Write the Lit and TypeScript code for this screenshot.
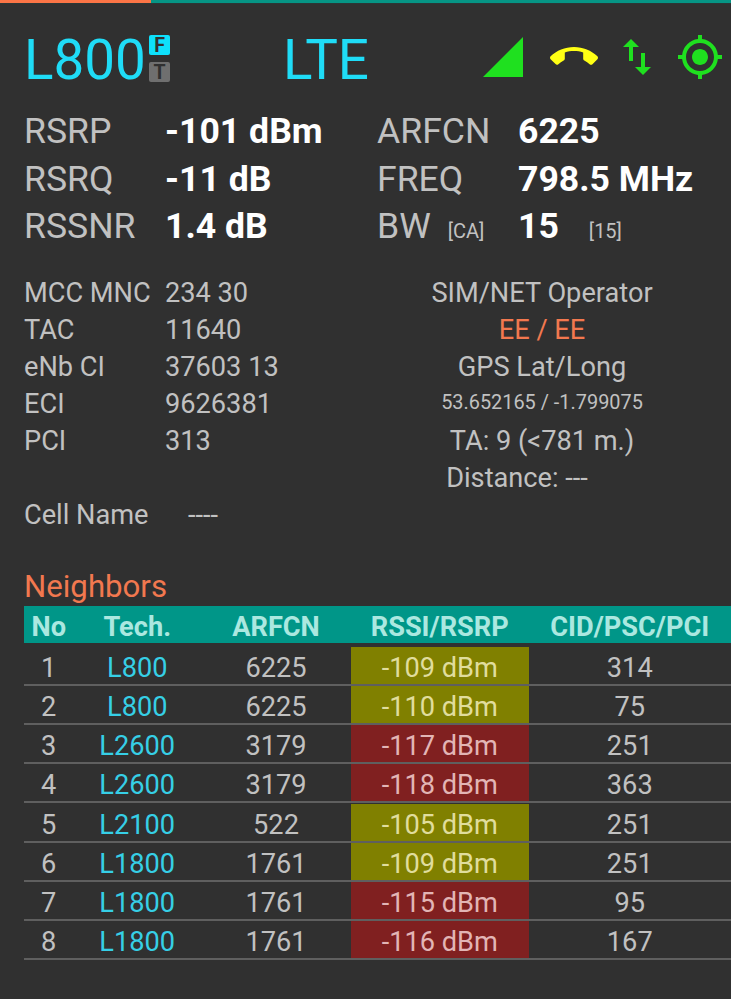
import { LitElement, html, css, svg } from "lit";
import { customElement } from "lit/decorators.js";
import { classMap } from "lit/directives/class-map.js";

interface Neighbor {
  tech: string;
  arfcn: number;
  level: number;
  cid: number;
}

const NEIGHBORS: Neighbor[] = [
  { tech: "L800", arfcn: 6225, level: -109, cid: 314 },
  { tech: "L800", arfcn: 6225, level: -110, cid: 75 },
  { tech: "L2600", arfcn: 3179, level: -117, cid: 251 },
  { tech: "L2600", arfcn: 3179, level: -118, cid: 363 },
  { tech: "L2100", arfcn: 522, level: -105, cid: 251 },
  { tech: "L1800", arfcn: 1761, level: -109, cid: 251 },
  { tech: "L1800", arfcn: 1761, level: -115, cid: 95 },
  { tech: "L1800", arfcn: 1761, level: -116, cid: 167 },
];

const IDENTITY: [string, string][] = [
  ["MCC MNC", "234 30"],
  ["TAC", "11640"],
  ["eNb CI", "37603 13"],
  ["ECI", "9626381"],
  ["PCI", "313"],
];

const SIGNAL = svg`<path d="M2 22h20V2z"/>`;
const CALL = svg`<path d="M12 9c-1.6 0-3.15.25-4.6.72v3.1c0 .39-.23.74-.56.9-.98.49-1.87 1.12-2.66 1.85-.18.18-.43.28-.7.28-.28 0-.53-.11-.71-.29L.29 13.08c-.18-.17-.29-.42-.29-.7 0-.28.11-.53.29-.71C3.34 8.78 7.46 7 12 7s8.66 1.78 11.71 4.67c.18.18.29.43.29.71 0 .28-.11.53-.29.71l-2.48 2.48c-.18.18-.43.29-.71.29-.27 0-.52-.11-.7-.28-.79-.74-1.69-1.36-2.67-1.85-.33-.16-.56-.5-.56-.9v-3.1C15.15 9.25 13.6 9 12 9z"/>`;
const TRAFFIC = svg`<path d="M9 3L5 6.99h3V14h2V6.99h3L9 3zm7 14.01V10h-2v7.01h-3L15 21l4-3.99h-3z"/>`;
const GPS = svg`<path d="M12 8c-2.21 0-4 1.79-4 4s1.79 4 4 4 4-1.79 4-4-1.79-4-4-4zm8.94 3A8.994 8.994 0 0 0 13 3.06V1h-2v2.06A8.994 8.994 0 0 0 3.06 11H1v2h2.06A8.994 8.994 0 0 0 11 20.94V23h2v-2.06A8.994 8.994 0 0 0 20.94 13H23v-2h-2.06zM12 19c-3.87 0-7-3.13-7-7s3.13-7 7-7 7 3.13 7 7-3.13 7-7 7z"/>`;

@customElement("app-root")
export class AppRoot extends LitElement {
  static styles = css`
    :host {
      display: flex;
      flex-direction: column;
      height: 999px;
      overflow: hidden;
      background: #303030;
      color: #c1c1c1;
      font-family: Roboto, "Liberation Sans", sans-serif;
      font-size: 27.2px;
    }
    .tabs {
      display: flex;
      height: 3px;
      border-bottom: 1px solid #2b3736;
      background: #069585;
    }
    .active {
      width: 151px;
      background: #fb7446;
    }
    .top {
      display: flex;
      height: 103px;
      padding-left: 24px;
      color: #1fdcf7;
      font-size: 54.8px;
    }
    .big {
      line-height: 112px;
    }
    .band {
      width: 125px;
    }
    .badges {
      display: flex;
      flex-direction: column;
      gap: 7px;
      width: 134px;
      padding-top: 31px;
    }
    .badge {
      width: 21px;
      height: 20px;
      border-radius: 2px;
      background: #6f6f6f;
      color: #303030;
      font-size: 19.5px;
      font-weight: 700;
      line-height: 21px;
      text-align: center;
    }
    .on {
      background: #0ee0fb;
    }
    .mode {
      width: 196px;
    }
    .icons {
      display: flex;
      gap: 15px;
      padding-top: 29px;
    }
    svg {
      display: block;
      width: 48px;
      height: 48px;
      fill: #1fe01f;
    }
    .call {
      margin-left: 8px;
      fill: #ffff14;
    }
    .metrics {
      display: grid;
      grid-template-columns: 141px 212px 141px 1fr;
      grid-auto-rows: 47.5px;
      padding-left: 24px;
      font-size: 35.6px;
      line-height: 48px;
    }
    .metrics b {
      color: #fff;
    }
    .metrics .small {
      font-size: 20px;
    }
    .metrics .ca {
      padding-left: 17px;
    }
    .metrics .ca-width {
      padding-left: 30px;
      font-weight: 400;
      color: #c1c1c1;
    }
    .details {
      display: flex;
      height: 259px;
      margin-top: 24.5px;
      padding-left: 24px;
      line-height: 39px;
    }
    .identity {
      width: 353px;
    }
    .pair {
      display: grid;
      grid-template-columns: 141px 1fr;
      height: 37px;
    }
    .cell-name {
      margin-top: 37px;
      grid-template-columns: 164px 1fr;
    }
    .place {
      width: 330px;
      text-align: center;
    }
    .place div {
      height: 37px;
    }
    .coords {
      font-size: 19.9px;
      line-height: 36px;
    }
    .accent {
      color: #f2784f;
    }
    .distance {
      padding-right: 50px;
    }
    .title {
      height: 39px;
      margin-top: 33.5px;
      padding-left: 24px;
      font-size: 31.2px;
      line-height: 39px;
      color: #f2784f;
    }
    .row {
      display: grid;
      grid-template-columns: 49.5px 127.5px 150px 177.5px 202.5px;
      height: 37px;
      margin-left: 24px;
      border-bottom: 2px solid #5f5f5f;
      text-align: center;
      line-height: 42px;
      margin-bottom: 0.15px;
    }
    .head {
      margin-bottom: 4.5px;
      border: 0;
      background: #009688;
      color: #abe8e0;
      font-weight: 700;
      line-height: 42px;
    }
    .row span {
      height: 37px;
    }
    .tech {
      color: #36cfe6;
    }
    .fair {
      background: #808000;
      color: #e0dd9d;
    }
    .poor {
      background: #802020;
      color: #e2b5b5;
    }
  `;

  private icon(shape: unknown, name = "") {
    return html`<svg class=${name} viewBox="0 0 24 24">${shape}</svg>`;
  }

  render() {
    return html`
      <div class="tabs"><div class="active"></div></div>
      <div class="top">
        <div class="big band">L800</div>
        <div class="badges"><div class="badge on">F</div><div class="badge">T</div></div>
        <div class="big mode">LTE</div>
        <div class="icons">
          ${this.icon(SIGNAL)}${this.icon(CALL, "call")}${this.icon(TRAFFIC)}${this.icon(GPS)}
        </div>
      </div>
      <div class="metrics">
        <span>RSRP</span><b>-101 dBm</b><span>ARFCN</span><b>6225</b>
        <span>RSRQ</span><b>-11 dB</b><span>FREQ</span><b>798.5 MHz</b>
        <span>RSSNR</span><b>1.4 dB</b><span>BW<span class="small ca">[CA]</span></span><b>15<span class="small ca-width">[15]</span></b>
      </div>
      <div class="details">
        <div class="identity">
          ${IDENTITY.map(([k, v]) => html`<div class="pair"><span>${k}</span><span>${v}</span></div>`)}
          <div class="pair cell-name"><span>Cell Name</span><span>----</span></div>
        </div>
        <div class="place">
          <div>SIM/NET Operator</div>
          <div class="accent">EE / EE</div>
          <div>GPS Lat/Long</div>
          <div class="coords">53.652165 / -1.799075</div>
          <div>TA: 9 (&lt;781 m.)</div>
          <div class="distance">Distance: ---</div>
        </div>
      </div>
      <div class="title">Neighbors</div>
      <div class="row head">
        <span>No</span><span>Tech.</span><span>ARFCN</span><span>RSSI/RSRP</span><span>CID/PSC/PCI</span>
      </div>
      ${NEIGHBORS.map(
        (n, i) => html`<div class="row">
          <span>${i + 1}</span><span class="tech">${n.tech}</span><span>${n.arfcn}</span>
          <span class=${classMap({ fair: n.level > -112, poor: n.level <= -112 })}>${n.level} dBm</span>
          <span>${n.cid}</span>
        </div>`
      )}
    `;
  }
}
